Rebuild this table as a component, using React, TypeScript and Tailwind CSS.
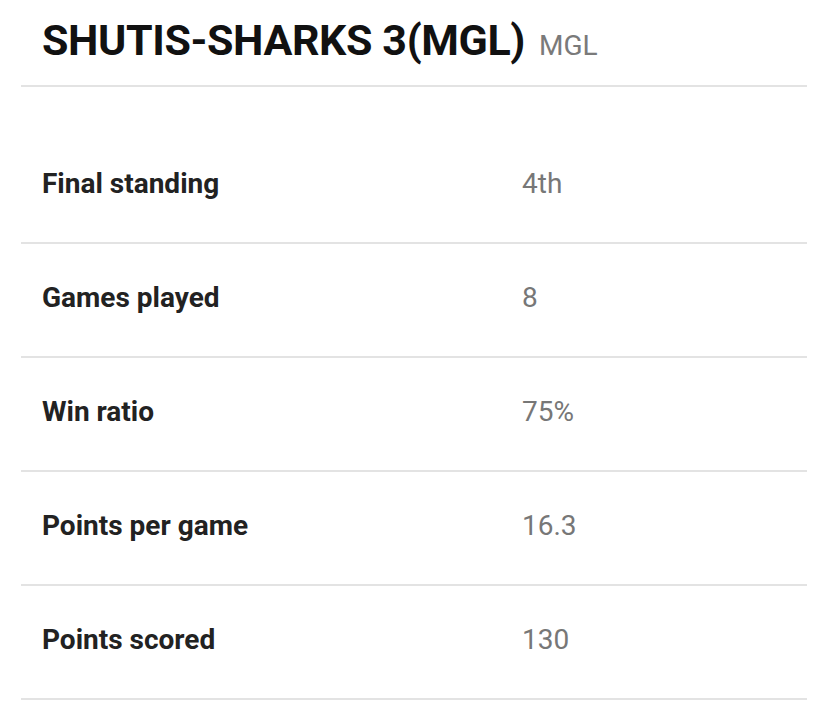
import React from 'react';

const stats = [
  { label: 'Final standing', value: '4th' },
  { label: 'Games played', value: '8' },
  { label: 'Win ratio', value: '75%' },
  { label: 'Points per game', value: '16.3' },
  { label: 'Points scored', value: '130' },
];

const App: React.FC = () => {
  return (
    <div className="min-h-screen bg-white font-['Roboto',sans-serif]">
      <div className="mx-[21px]">
        <div className="h-[87px] flex items-center pb-[5px] pl-[21px] border-b-2 border-[#e3e3e3]">
          <h1 className="text-[43px] leading-none font-bold text-[#111111] tracking-[-0.4px]">
            SHUTIS-SHARKS 3(MGL)
            <span className="ml-[14px] text-[28px] font-normal tracking-normal text-[#7a7a7a]">MGL</span>
          </h1>
        </div>
        <div className="pt-[43px]">
          {stats.map((s) => (
            <div
              key={s.label}
              className="h-[114px] grid grid-cols-[480px_1fr] items-center pb-[4px] pl-[21px] border-b-2 border-[#e3e3e3]"
            >
              <span className="text-[28px] font-bold text-[#222222]">{s.label}</span>
              <span className="text-[28px] text-[#777777]">{s.value}</span>
            </div>
          ))}
        </div>
      </div>
    </div>
  );
};

export default App;
